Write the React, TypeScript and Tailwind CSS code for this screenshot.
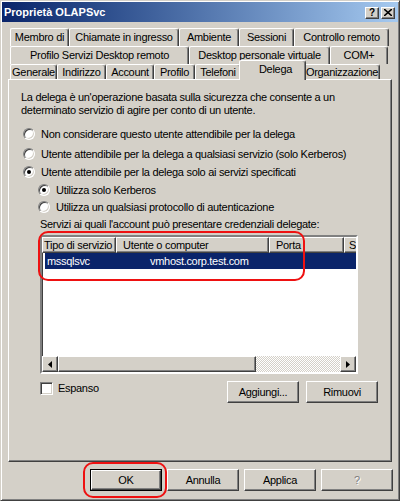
import React from 'react';

const raised =
  'border border-t-white border-l-white border-r-[#404040] border-b-[#404040] shadow-[inset_-1px_-1px_#808080]';

function TitleButton({ children }: { children: React.ReactNode }) {
  return (
    <div
      className={`w-[14px] h-[12px] bg-[#d4d0c8] ${raised} flex items-center justify-center text-black text-[10px] font-bold leading-none`}
    >
      {children}
    </div>
  );
}

function Tab({ label, className, active }: { label: string; className: string; active?: boolean }) {
  return (
    <div
      className={`${className} shrink-0 flex items-center justify-center whitespace-nowrap border-t border-l border-r border-t-white border-l-white border-r-[#404040] shadow-[inset_-1px_0_#808080] rounded-tl-[2px] rounded-tr-[3px] ${
        active ? 'relative z-10 h-[20px] -mb-px -mx-[2px] bg-[#d4d0c8] pb-[3px] pl-[6px]' : 'h-full'
      }`}
    >
      {label}
    </div>
  );
}

function Radio({ checked }: { checked?: boolean }) {
  return (
    <div className="w-[12px] h-[12px] shrink-0 rounded-full border border-t-[#808080] border-l-[#808080] border-r-white border-b-white bg-white shadow-[inset_1px_1px_#404040,inset_-1px_-1px_#d4d0c8] flex items-center justify-center">
      {checked && <div className="w-[4px] h-[4px] rounded-full bg-black" />}
    </div>
  );
}

function RadioRow({ label, checked, className }: { label: string; checked?: boolean; className: string }) {
  return (
    <div className={`${className} h-[16px] flex items-center gap-[6px]`}>
      <Radio checked={checked} />
      <span>{label}</span>
    </div>
  );
}

function Button({ label, className, disabled }: { label: string; className?: string; disabled?: boolean }) {
  return (
    <div
      className={`w-[72px] h-[22px] bg-[#d4d0c8] ${raised} flex items-center justify-center ${className ?? ''} ${
        disabled ? 'text-[#808080] [text-shadow:1px_1px_#ffffff]' : 'text-black'
      }`}
    >
      {label}
    </div>
  );
}

function Arrow({ dir }: { dir: 'left' | 'right' }) {
  return (
    <div className={`w-[16px] h-full shrink-0 bg-[#d4d0c8] ${raised} flex items-center justify-center`}>
      <svg width="4" height="7" viewBox="0 0 4 7">
        {dir === 'left' ? <path d="M4 0 L0 3.5 L4 7 Z" fill="black" /> : <path d="M0 0 L4 3.5 L0 7 Z" fill="black" />}
      </svg>
    </div>
  );
}

export default function App() {
  return (
    <div className="w-[400px] h-[501px] bg-[#d4d0c8] border border-t-[#d4d0c8] border-l-[#d4d0c8] border-r-[#404040] border-b-[#404040] shadow-[inset_1px_1px_#ffffff,inset_-1px_-1px_#808080] text-[11px] leading-[13px] tracking-[-0.3px] text-black font-['Liberation_Sans','Arial',sans-serif] overflow-hidden">
      {/* title bar */}
      <div className="h-[20px] mx-[1px] mt-[1px] bg-gradient-to-r from-[#0a246a] to-[#a6caf0] flex items-center justify-between pl-[2px] pr-[3px]">
        <span className="text-white font-bold text-[11px] tracking-normal">Proprietà OLAPSvc</span>
        <div className="flex gap-[2px] mt-[1px]">
          <TitleButton>?</TitleButton>
          <TitleButton>
            <svg width="8" height="7" viewBox="0 0 8 7">
              <path d="M0 0 L8 7 M8 0 L0 7" stroke="black" strokeWidth="1.6" />
            </svg>
          </TitleButton>
        </div>
      </div>

      <div className="pl-[7px] pt-[6px]">
        {/* tabs */}
        <div className="ml-[2px]">
          <div className="h-[18px] flex">
            <Tab label="Membro di" className="w-[59px]" />
            <Tab label="Chiamate in ingresso" className="w-[110px]" />
            <Tab label="Ambiente" className="w-[60px]" />
            <Tab label="Sessioni" className="w-[55px]" />
            <Tab label="Controllo remoto" className="w-[95px]" />
          </div>
          <div className="h-[18px] flex">
            <Tab label="Profilo Servizi Desktop remoto" className="w-[179px]" />
            <Tab label="Desktop personale virtuale" className="w-[141px]" />
            <Tab label="COM+" className="w-[58px]" />
          </div>
          <div className="h-[15px] flex items-end">
            <Tab label="Generale" className="w-[47px]" />
            <Tab label="Indirizzo" className="w-[49px]" />
            <Tab label="Account" className="w-[48px]" />
            <Tab label="Profilo" className="w-[41px]" />
            <Tab label="Telefoni" className="w-[46px]" />
            <Tab label="Delega" className="w-[67px]" active />
            <Tab label="Organizzazione" className="w-[76px]" />
          </div>
        </div>

        {/* panel */}
        <div className={`w-[384px] h-[383px] ${raised} pl-[12px] pt-[11px]`}>
          <p>La delega è un'operazione basata sulla sicurezza che consente a un</p>
          <p>determinato servizio di agire per conto di un utente.</p>

          <RadioRow className="mt-[9px] ml-[2px]" label="Non considerare questo utente attendibile per la delega" />
          <RadioRow className="mt-[4px] ml-[2px]" label="Utente attendibile per la delega a qualsiasi servizio (solo Kerberos)" />
          <RadioRow className="mt-[2px] ml-[2px]" checked label="Utente attendibile per la delega solo ai servizi specificati" />
          <RadioRow className="mt-[2px] ml-[17px]" checked label="Utilizza solo Kerberos" />
          <RadioRow className="mt-[1px] ml-[17px]" label="Utilizza un qualsiasi protocollo di autenticazione" />

          <p className="mt-[3px] ml-[19px]">Servizi ai quali l'account può presentare credenziali delegate:</p>

          {/* list */}
          <div className="relative mt-[4px] ml-[19px] w-[318px] h-[139px] border-2 border-t-[#808080] border-l-[#808080] border-r-white border-b-white">
            <div className="w-full h-full bg-white flex flex-col overflow-hidden shadow-[inset_1px_1px_#404040]">
              <div className="h-[16px] flex shrink-0 bg-[#d4d0c8]">
                <div className={`w-[74px] shrink-0 ${raised} pl-[1px] flex items-center whitespace-nowrap`}>
                  Tipo di servizio
                </div>
                <div className={`w-[153px] shrink-0 ${raised} pl-[6px] flex items-center`}>Utente o computer</div>
                <div className={`w-[75px] shrink-0 ${raised} pl-[6px] flex items-center`}>Porta</div>
                <div className={`w-[40px] shrink-0 ${raised} pl-[4px] flex items-center`}>S</div>
              </div>
              <div className="h-[16px] ml-[3px] bg-[#0a246a] text-white flex items-center">
                <span className="w-[105px] pl-[2px] shrink-0">mssqlsvc</span>
                <span>vmhost.corp.test.com</span>
              </div>
              <div className="flex-1" />
              <div className="h-[16px] flex shrink-0">
                <Arrow dir="left" />
                <div className={`w-[198px] shrink-0 bg-[#d4d0c8] ${raised}`} />
                <div className="flex-1 bg-[repeating-conic-gradient(#d4d0c8_0_25%,#ffffff_0_50%)] bg-[length:2px_2px]" />
                <Arrow dir="right" />
              </div>
            </div>
            <div className="absolute left-[-4px] top-[-6px] w-[267px] h-[50px] border-2 border-[#ee1111] rounded-[10px] pointer-events-none" />
          </div>

          {/* checkbox + buttons */}
          <div className="mt-[7px] ml-[19px] w-[338px] flex items-start">
            <div className="flex items-center gap-[5px] mt-[1px]">
              <div className="w-[13px] h-[13px] bg-white border border-t-[#808080] border-l-[#808080] border-r-white border-b-white shadow-[inset_1px_1px_#404040,inset_-1px_-1px_#d4d0c8]" />
              <span>Espanso</span>
            </div>
            <div className="ml-auto flex gap-[7px]">
              <Button label="Aggiungi..." className="w-[71px]" />
              <Button label="Rimuovi" className="w-[71px]" />
            </div>
          </div>
        </div>

        {/* bottom buttons */}
        <div className="mt-[7px] ml-[82px] flex gap-[5px]">
          <div className="relative">
            <div className="w-[72px] h-[22px] border border-black">
              <div className={`w-full h-full bg-[#d4d0c8] ${raised} flex items-center justify-center`}>OK</div>
            </div>
            <div className="absolute left-[-7px] top-[-7px] w-[84px] h-[36px] border-2 border-[#ee1111] rounded-[10px] pointer-events-none" />
          </div>
          <Button label="Annulla" />
          <Button label="Applica" />
          <Button label="?" disabled />
        </div>
      </div>
    </div>
  );
}
